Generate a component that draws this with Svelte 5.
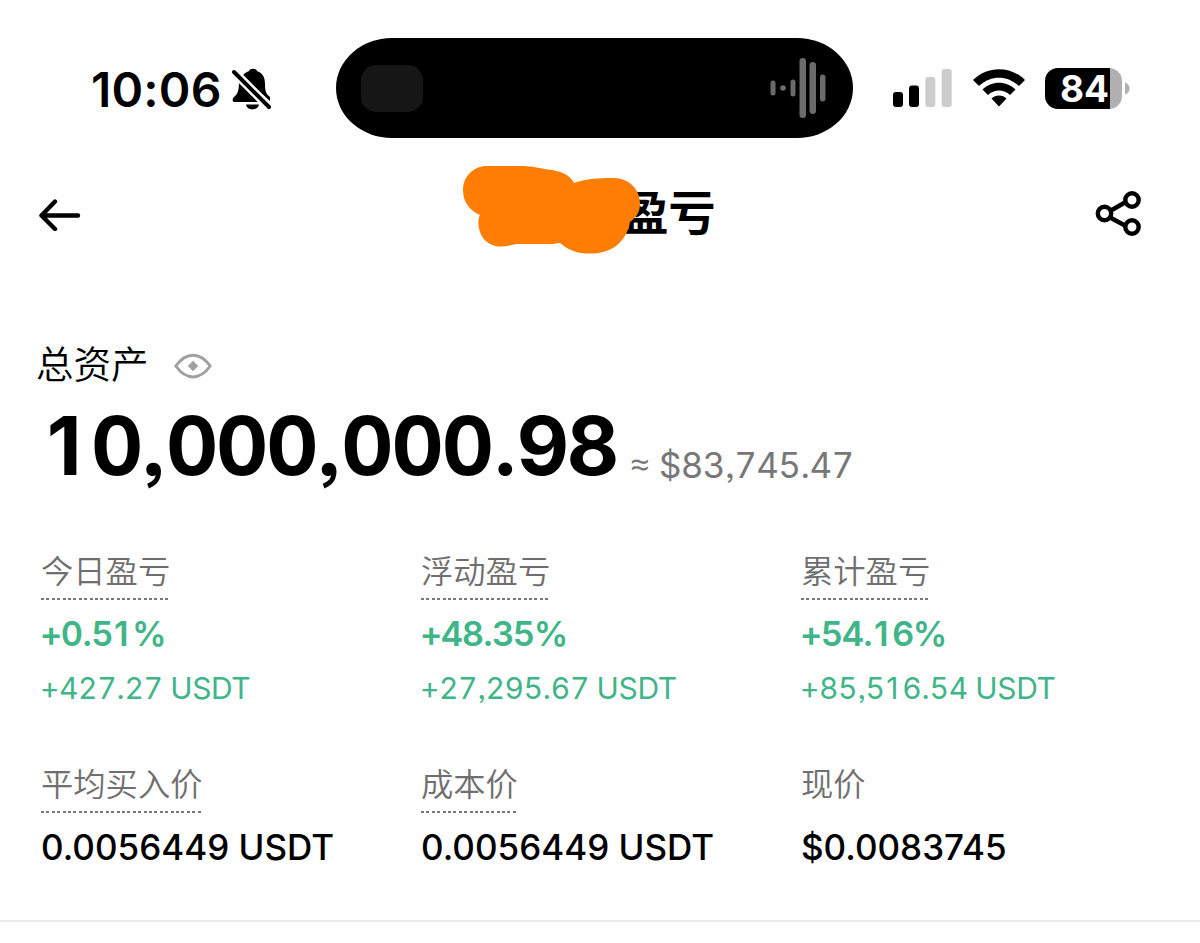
<script lang="ts">
  type Stat = {
    label: string;
    dotted: boolean;
    percent?: string;
    amount?: string;
    price?: string;
  };

  const assets = { total: "10,000,000.98", usd: "$83,745.47" };

  const pnl: Stat[] = [
    { label: "今日盈亏", dotted: true, percent: "+0.51%", amount: "+427.27 USDT" },
    { label: "浮动盈亏", dotted: true, percent: "+48.35%", amount: "+27,295.67 USDT" },
    { label: "累计盈亏", dotted: true, percent: "+54.16%", amount: "+85,516.54 USDT" },
  ];

  const prices: Stat[] = [
    { label: "平均买入价", dotted: true, price: "0.0056449 USDT" },
    { label: "成本价", dotted: true, price: "0.0056449 USDT" },
    { label: "现价", dotted: false, price: "$0.0083745" },
  ];
</script>

<!-- the tabular "1" has a foot and the tabular comma is square, so both keep their plain form -->
{#snippet figures(text: string)}
  {#each text.split(/([1,.])/).filter(Boolean) as part}{#if part === "1"}<span class="one">1</span>{:else if part === "," || part === "."}<span class="mark">{part}</span>{:else}{part}{/if}{/each}
{/snippet}

<div class="screen">
  <div class="status-bar">
    <div class="clock">
      <span class="time">10:06</span>
      <svg class="bell" width="42" height="44" viewBox="0 0 42 44">
        <path d="M10 9C12 5 15 4 17 3C18 0 24 0 25 3C31 5 33 10 33 16C33 23 34 26 38 29V33Z" />
        <path d="M7 13L29 34H3C0 34 0 31 2 29C6 26 7 22 7 13Z" />
        <path d="M14 36.500H27C26 43 15 43 14 36.500Z" />
        <path class="gap" d="M2 4L37 39" />
        <path class="slash" d="M2 4L37 39" />
      </svg>
    </div>

    <div class="island">
      <div class="artwork"></div>
      <svg width="58" height="62" viewBox="0 0 58 62">
        <g fill="#6b6b6b">
          <rect x="0.500" y="23.500" width="5" height="15" rx="2.500" />
          <circle cx="13" cy="31" r="2.800" />
          <rect x="20.500" y="22.500" width="5" height="17" rx="2.500" />
          <rect x="29.500" y="1" width="6.500" height="60" rx="3.200" />
          <rect x="39.500" y="5" width="6.500" height="52" rx="3.200" />
          <rect x="50" y="17.500" width="5.500" height="27" rx="2.700" />
        </g>
      </svg>
    </div>

    <div class="indicators">
      <svg width="60" height="38" viewBox="0 0 60 38">
        <rect x="0" y="23" width="10" height="15" rx="3" />
        <rect x="16" y="16.500" width="10" height="21.500" rx="3" />
        <rect x="32.300" y="8" width="10" height="30" rx="3" fill="#ccc" />
        <rect x="48.700" y="0" width="10" height="38" rx="3" fill="#ccc" />
      </svg>
      <svg width="52" height="38" viewBox="0 0 52 38">
        <path d="M0.500 11.500Q0 11 0.500 10.500C15 -3.300 37 -3.300 51.500 10.500Q52 11 51.500 11.500L46.500 16.500Q46 17 45.500 16.500C34 6 18 6 6.500 16.500Q6 17 5.500 16.500Z" />
        <path d="M9.500 20.500C18.500 11.500 33.500 11.500 42.500 20.500L37 26C31 20 21 20 15 26Z" />
        <path d="M18.500 29.500C22.500 25.500 29.500 25.500 33.500 29.500L26.500 37Q26 37.500 25.500 37Z" />
      </svg>
      <div class="battery">
        <div class="cell"><span>84</span></div>
        <svg width="5" height="13" viewBox="0 0 5 13"><path d="M0 0.500C6 2 6 11 0 12.500Z" fill="#b0b0b0" /></svg>
      </div>
    </div>
  </div>

  <header class="nav">
    <svg width="42" height="34" viewBox="0 0 42 34">
      <path class="line" d="M39 18.500H3M16 4.500L2.500 18.500L16 32" />
    </svg>
    <div class="title">
      <h1>盈亏</h1>
      <svg class="scribble" width="180" height="90" viewBox="0 0 180 90">
        <path d="M25 1H56C72 1 77 3.500 90 5C103 7 109 12 112 18C123 14 135 13 151 13C167 13 178 24 178 39C178 49 172 54 168 57C167 64 163 74 154 81C145 87 137 89 124 88.500C111 88 103 82 98 78C96 77.500 94 79 88 79H56C50 79 47 81.500 40 81.500C26 82 17 72 16.500 59C16 55 17 52 18 50C8 46 1 37 1 25C1 11 12 1 25 1Z" />
      </svg>
    </div>
    <svg width="48" height="48" viewBox="0 0 48 48">
      <path class="line" d="M16 20.500L29 13M16 28L29 35" />
      <circle class="line" cx="9.500" cy="23.500" r="6.700" />
      <circle class="line" cx="37" cy="10" r="6.700" />
      <circle class="line" cx="37" cy="37" r="6.700" />
    </svg>
  </header>

  <section class="assets">
    <div class="assets-label">
      <span>总资产</span>
      <svg width="38" height="26" viewBox="0 0 38 26">
        <path d="M1.800 13C12 -1.500 26 -1.500 36.200 13C26 27.500 12 27.500 1.800 13Z" fill="none" stroke="#a0a0a0" stroke-width="3" stroke-linejoin="round" />
        <path d="M19 7.800L24.200 13L19 18.200L13.800 13Z" fill="#a0a0a0" />
      </svg>
    </div>
    <div class="assets-value">
      <span class="total">{@render figures(assets.total)}</span>
      <span class="approx">≈</span>
      <span class="usd">{@render figures(assets.usd)}</span>
    </div>
  </section>

  <section class="grid pnl">
    {#each pnl as s (s.label)}
      <div class="stat">
        <span class="label" class:dotted={s.dotted}>{s.label}</span>
        <span class="percent">{@render figures(s.percent ?? "")}</span>
        <span class="amount">{@render figures(s.amount ?? "")}</span>
      </div>
    {/each}
  </section>

  <section class="grid prices">
    {#each prices as s (s.label)}
      <div class="stat">
        <span class="label" class:dotted={s.dotted}>{s.label}</span>
        <span class="price">{s.price}</span>
      </div>
    {/each}
  </section>
</div>

<style>
  :global(body) { background: #fff; }

  .screen {
    box-sizing: border-box;
    width: 1200px;
    height: 943px;
    overflow: hidden;
    background: #fefefe;
    color: #000;
    font-family: Inter, "Noto Sans CJK SC", sans-serif;
    font-feature-settings: "ss03";
  }
  svg { display: block; flex: none; }
  .line {
    fill: none;
    stroke: #000;
    stroke-width: 4.4;
    stroke-linecap: round;
    stroke-linejoin: round;
  }

  .status-bar {
    display: grid;
    grid-template-columns: 336px 517px 1fr;
    align-items: center;
    padding-top: 38px;
    height: 100px;
  }
  .clock {
    display: flex;
    align-items: center;
    gap: 12px;
    padding-left: 91px;
  }
  .time {
    width: 129px;
    padding-top: 3px;
    font: 600 48px/60px Inter, sans-serif;
    letter-spacing: 0.2px;
    white-space: nowrap;
  }
  .gap { stroke: #fefefe; stroke-width: 9; }
  .slash { stroke: #000; stroke-width: 4; stroke-linecap: round; }
  .bell { margin-top: 3px; }
  .island {
    box-sizing: border-box;
    display: flex;
    align-items: center;
    justify-content: space-between;
    height: 100px;
    padding: 0 25px;
    border-radius: 56px / 50px;
    background: #000;
  }
  .artwork {
    width: 62px;
    height: 47px;
    border-radius: 15px;
    background: #161616;
  }
  .indicators {
    display: flex;
    align-items: center;
    padding-left: 40px;
  }
  .indicators > svg + svg { margin-left: 20px; }
  .battery {
    display: flex;
    align-items: center;
    gap: 3px;
    margin-left: 20px;
  }
  .cell {
    width: 77px;
    height: 41px;
    border-radius: 13px;
    background: linear-gradient(to right, #000 65px, #b0b0b0 65px);
    color: #fff;
    font: 700 37px/41px Inter, sans-serif;
    text-indent: 15px;
  }

  .nav {
    display: flex;
    align-items: center;
    justify-content: space-between;
    height: 152px;
    padding: 0 57px 0 39px;
  }
  .title {
    position: relative;
    width: 254px;
    margin-left: 1px;
  }
  h1 {
    margin: -8px 0 0;
    font: 700 47px/60px "Noto Sans CJK SC", sans-serif;
    text-align: right;
  }
  .scribble {
    position: absolute;
    left: 0;
    top: -23px;
    fill: #ff7d05;
  }

  .assets { padding: 50px 0 0 36px; }
  .assets-label {
    display: flex;
    align-items: center;
    gap: 25px;
    height: 50px;
    font-size: 37.500px;
    line-height: 50px;
    font-weight: 350;
  }
  .assets-label svg { margin-top: 1px; }
  .assets-value {
    display: flex;
    align-items: flex-start;
    height: 110px;
    white-space: nowrap;
  }
  .total, .percent, .amount, .usd { font-variant-numeric: tabular-nums; }
  .one {
    padding: 0 0.14em 0 0.06em;
    font-variant-numeric: normal;
  }
  .mark { font-variant-numeric: normal; }
  .total {
    box-sizing: border-box;
    width: 594px;
    padding-left: 6px;
    font-size: 81px;
    line-height: 112px;
    font-weight: 700;
    letter-spacing: -2.2px;
  }
  .approx {
    width: 29px;
    color: #777;
    font-family: "Open Sans", sans-serif;
    font-size: 34px;
    line-height: 149px;
  }
  .usd {
    color: #777;
    font-size: 35px;
    line-height: 150px;
    letter-spacing: -0.7px;
  }

  .grid {
    display: grid;
    grid-template-columns: repeat(3, 380px);
    padding-left: 41px;
  }
  .stat {
    display: flex;
    flex-direction: column;
    align-items: flex-start;
    white-space: nowrap;
  }
  .label {
    height: 50px;
    color: #6f6f6f;
    font-size: 32.300px;
    line-height: 44px;
    font-weight: 350;
  }
  .dotted {
    background: repeating-linear-gradient(to right, #777 0 3px, transparent 3px 5.400px) left bottom / 100% 2px no-repeat;
  }
  .pnl { margin-top: 50px; }
  .percent {
    margin: 9px 0 0 -1px;
    color: #3fb588;
    font-size: 34.500px;
    line-height: 50px;
    font-weight: 600;
    letter-spacing: -1.5px;
  }
  .amount {
    margin-left: -1px;
    color: #3fb588;
    font-size: 30px;
    line-height: 58px;
    letter-spacing: -0.4px;
  }
  .prices {
    height: 157px;
    padding-top: 46px;
    border-bottom: 2px solid #ececec;
  }
  .price {
    margin-top: 9px;
    font-size: 35px;
    line-height: 50px;
    font-weight: 500;
  }
</style>
